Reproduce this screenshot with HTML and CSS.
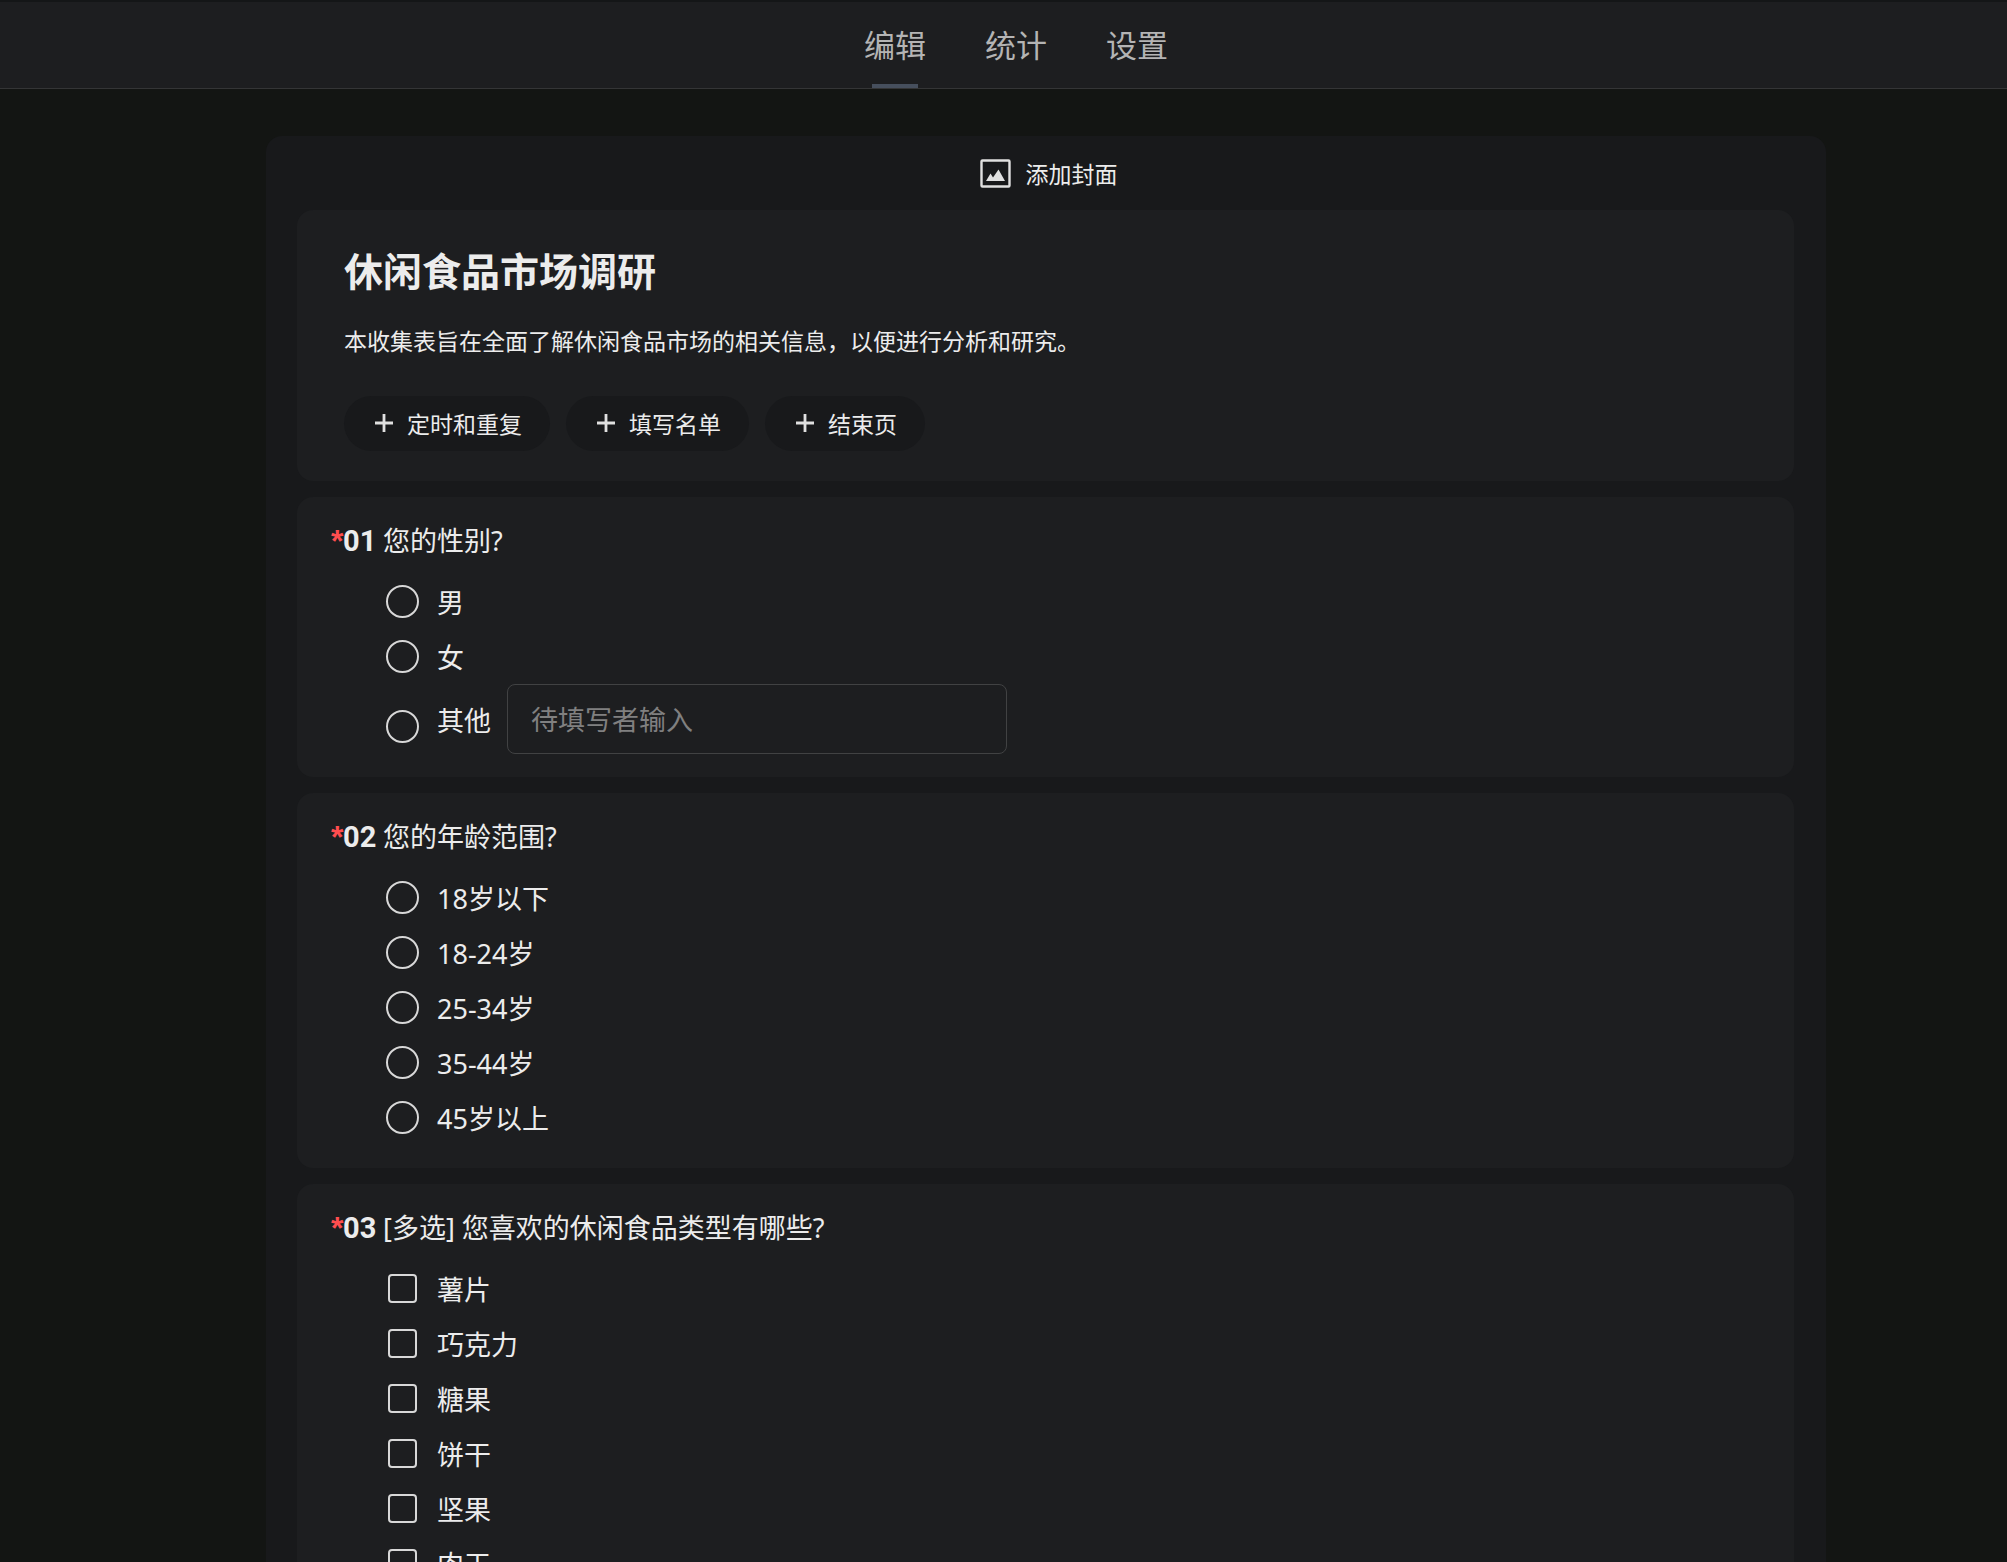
FILE: index.html
```html
<!DOCTYPE html>
<html lang="zh-CN">
<head>
    <meta charset="UTF-8">
    <meta name="viewport" content="width=device-width, initial-scale=1.0">
    <title>休闲食品市场调研</title>
    <link rel="stylesheet" href="styles.css">
</head>
<body>

    <header class="topbar">
        <nav class="tabs">
            <a href="#edit" class="tab active">编辑</a>
            <a href="#stats" class="tab">统计</a>
            <a href="#settings" class="tab">设置</a>
        </nav>
    </header>

    <main class="main">
        <form class="panel">
            <button type="button" class="cover-btn">
                <svg class="cover-icon" viewBox="0 0 31 29">
                    <rect x="1.5" y="1.5" width="28" height="26" rx="1" fill="none" stroke="currentColor" stroke-width="2.4"/>
                    <path d="M6 22 L10.5 14.5 L13 18.5 L18.5 10.5 L25 22 Z" fill="currentColor"/>
                </svg>
                添加封面
            </button>

            <section class="card intro">
                <h1>休闲食品市场调研</h1>
                <p>本收集表旨在全面了解休闲食品市场的相关信息，以便进行分析和研究。</p>
                <div class="actions">
                    <button type="button" class="pill">
                        <svg class="plus" viewBox="0 0 20 20"><path d="M10 1V19M1 10H19" stroke="currentColor" stroke-width="2.8"/></svg>
                        定时和重复
                    </button>
                    <button type="button" class="pill">
                        <svg class="plus" viewBox="0 0 20 20"><path d="M10 1V19M1 10H19" stroke="currentColor" stroke-width="2.8"/></svg>
                        填写名单
                    </button>
                    <button type="button" class="pill">
                        <svg class="plus" viewBox="0 0 20 20"><path d="M10 1V19M1 10H19" stroke="currentColor" stroke-width="2.8"/></svg>
                        结束页
                    </button>
                </div>
            </section>

            <section class="card question">
                <h2><span class="required">*</span><span class="num">01</span><span>您的性别?</span></h2>
                <label class="option"><input type="radio" name="gender">男</label>
                <label class="option"><input type="radio" name="gender">女</label>
                <div class="option other">
                    <input type="radio" name="gender" id="genderOther">
                    <label for="genderOther">其他</label>
                    <input type="text" class="other-input" placeholder="待填写者输入" aria-label="其他">
                </div>
            </section>

            <section class="card question">
                <h2><span class="required">*</span><span class="num">02</span><span>您的年龄范围?</span></h2>
                <label class="option"><input type="radio" name="age">18岁以下</label>
                <label class="option"><input type="radio" name="age">18-24岁</label>
                <label class="option"><input type="radio" name="age">25-34岁</label>
                <label class="option"><input type="radio" name="age">35-44岁</label>
                <label class="option"><input type="radio" name="age">45岁以上</label>
            </section>

            <section class="card question">
                <h2><span class="required">*</span><span class="num">03</span><span>[多选] 您喜欢的休闲食品类型有哪些?</span></h2>
                <label class="option"><input type="checkbox" name="snack">薯片</label>
                <label class="option"><input type="checkbox" name="snack">巧克力</label>
                <label class="option"><input type="checkbox" name="snack">糖果</label>
                <label class="option"><input type="checkbox" name="snack">饼干</label>
                <label class="option"><input type="checkbox" name="snack">坚果</label>
                <label class="option"><input type="checkbox" name="snack">肉干</label>
            </section>
        </form>
    </main>

</body>
</html>
```

FILE: styles.css
```css
* {
    box-sizing: border-box;
}
body {
    display: flex;
    flex-direction: column;
    height: 100vh;
    margin: 0;
    font-family: "Noto Sans", "Noto Sans CJK SC", sans-serif;
    font-size: 27px;
    color: #ececec;
    background: #131513;
}
button, input {
    font-family: inherit;
    color: inherit;
}

/* top tabs */
.topbar {
    flex: none;
    padding-left: 25px;
    background: #1d1e20;
    border-top: 2px solid #141617;
    border-bottom: 1px solid #343536;
}
.tabs {
    display: flex;
    justify-content: center;
    gap: 59px;
}
.tab {
    position: relative;
    font-size: 31px;
    line-height: 86px;
    color: #b4b4b4;
    text-decoration: none;
}
.tab.active::after {
    content: "";
    position: absolute;
    left: 8px;
    right: 8px;
    bottom: 0;
    height: 4px;
    background: #464f5d;
}

/* form */
.main {
    flex: 1;
    min-height: 0;
    overflow-y: auto;
    scrollbar-width: none;
    padding: 47px 0 0 85px;
}
.panel {
    display: flex;
    flex-direction: column;
    gap: 16px;
    max-width: 1560px;
    margin: 0 auto;
    padding: 0 32px 32px 31px;
    background: #18191b;
    border-radius: 16px;
}
.cover-btn {
    display: flex;
    align-items: center;
    align-self: center;
    gap: 15px;
    height: 74px;
    margin-bottom: -16px;
    padding: 0 0 0 6px;
    font-size: 23px;
    background: none;
    border: none;
    cursor: pointer;
}
.cover-icon {
    width: 31px;
    height: 29px;
    color: #e0e0e0;
}
.card {
    background: #1d1e20;
    border-radius: 16px;
}
.intro {
    padding: 37px 47px 30px;
}
.intro h1 {
    margin: 0;
    font-size: 39px;
    line-height: 48px;
}
.intro p {
    margin: 28px 0 37px;
    font-size: 23px;
    line-height: 36px;
}
.actions {
    display: flex;
    gap: 16px;
}
.pill {
    display: flex;
    align-items: center;
    gap: 13px;
    height: 55px;
    padding: 0 28px 2px 30px;
    font-size: 23px;
    background: #18191b;
    border: none;
    border-radius: 28px;
    cursor: pointer;
}
.plus {
    width: 20px;
    height: 20px;
    color: #e0e0e0;
}

/* questions */
.question {
    padding: 24px 34px 23px;
}
.question h2 {
    display: flex;
    margin: 0 0 13px;
    font-size: 27px;
    font-weight: normal;
    line-height: 40px;
}
.required {
    width: 12px;
    font-family: "Liberation Sans", sans-serif;
    font-size: 32px;
    font-weight: bold;
    color: #ff4d4f;
}
.num {
    width: 40px;
    font-family: Roboto, sans-serif;
    font-size: 29px;
    font-weight: bold;
}
.option {
    display: flex;
    align-items: center;
    height: 55px;
    padding-left: 55px;
}
.option input[type="radio"],
.option input[type="checkbox"] {
    appearance: none;
    flex: none;
    width: 33px;
    height: 33px;
    margin: 0 18px 0 0;
    border: 2px solid #d8d8d8;
    border-radius: 50%;
}
.option input[type="checkbox"] {
    width: 29px;
    height: 29px;
    margin: 0 20px 0 2px;
    border-radius: 4px;
}
.option input:checked {
    background: #d8d8d8;
}
.option.other {
    height: 70px;
}
.option.other input[type="radio"] {
    margin-top: 14px;
}
.other-input {
    width: 500px;
    height: 70px;
    margin-left: 16px;
    padding: 0 23px;
    font-size: 27px;
    background: none;
    border: 1px solid #414243;
    border-radius: 8px;
}
.other-input::placeholder {
    color: #808080;
}
```
